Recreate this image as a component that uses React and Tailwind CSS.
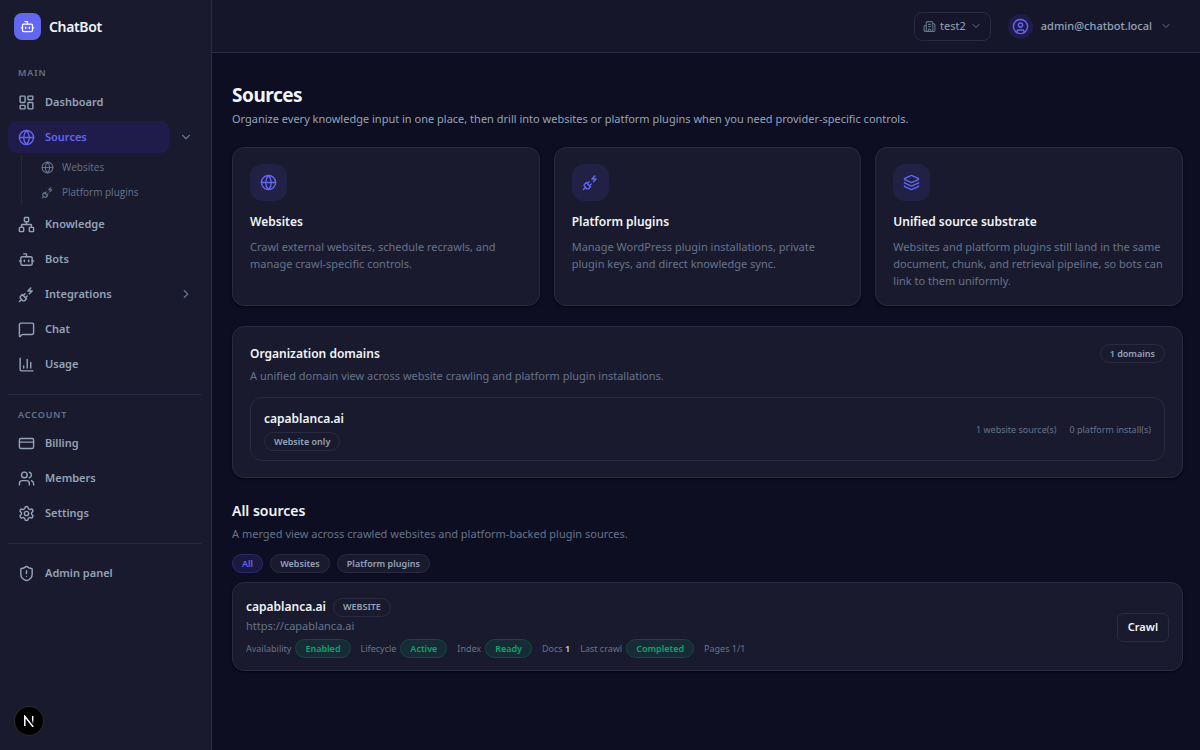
import {
  LayoutDashboard, Globe, Network, Bot, PlugZap, MessageSquare, ChartColumn, CreditCard,
  Users, Settings, ShieldAlert, Building2, CircleUser, Layers, ChevronDown, ChevronRight,
} from 'lucide-react';

function NavItem({ icon: Icon, label, active }) {
  return (
    <a
      href="#"
      className={`flex h-8 min-w-0 flex-1 items-center gap-[10px] rounded-lg px-[10px] text-[11px] font-semibold ${active ? 'bg-[#1f1b4b] text-[#6366f1]' : 'text-[#94a3b8]'}`}
    >
      <Icon size={17} className="shrink-0" />
      <span>{label}</span>
    </a>
  );
}

function NavRow({ children }) {
  return <li className="flex items-center">{children}</li>;
}

function NavHeading({ children }) {
  return (
    <h2 className="px-[10px] text-[9px] leading-4 font-semibold tracking-widest text-[#64748b] uppercase">
      {children}
    </h2>
  );
}

function SubItem({ icon: Icon, label }) {
  return (
    <li>
      <a href="#" className="flex h-[25px] items-center gap-2 pl-[19px] font-['Open_Sans','Noto_Sans',sans-serif] text-[10px] font-medium text-[#64748b]">
        <Icon size={13} className="shrink-0" />
        <span>{label}</span>
      </a>
    </li>
  );
}

function Sidebar() {
  return (
    <aside className="flex w-[212px] shrink-0 flex-col border-r border-[#2a2a40] bg-[#1a1a2e] px-2">
      <div className="flex h-[53px] items-center gap-2 px-[6px]">
        <span className="flex size-[27px] items-center justify-center rounded-lg bg-[#6366f1] text-white">
          <Bot size={15} />
        </span>
        <span className="text-[14px] font-semibold tracking-tight text-[#f1f5f9]">ChatBot</span>
      </div>
      <nav className="mt-3">
        <NavHeading>Main</NavHeading>
        <ul className="mt-[5px] flex flex-col gap-[3px]">
          <NavRow><NavItem icon={LayoutDashboard} label="Dashboard" /></NavRow>
          <li>
            <div className="flex items-center">
              <NavItem icon={Globe} label="Sources" active />
              <button aria-label="Collapse sources" className="flex h-8 w-[34px] items-center justify-center text-[#64748b]">
                <ChevronDown size={14} />
              </button>
            </div>
            <ul className="mt-[2px] ml-[13px] border-l border-[#25253c]">
              <SubItem icon={Globe} label="Websites" />
              <SubItem icon={PlugZap} label="Platform plugins" />
            </ul>
          </li>
          <NavRow><NavItem icon={Network} label="Knowledge" /></NavRow>
          <NavRow><NavItem icon={Bot} label="Bots" /></NavRow>
          <NavRow>
            <NavItem icon={PlugZap} label="Integrations" />
            <button aria-label="Expand integrations" className="flex h-8 w-[34px] items-center justify-center text-[#64748b]">
              <ChevronRight size={14} />
            </button>
          </NavRow>
          <NavRow><NavItem icon={MessageSquare} label="Chat" /></NavRow>
          <NavRow><NavItem icon={ChartColumn} label="Usage" /></NavRow>
        </ul>
        <hr className="mt-[14px] mr-[2px] border-[#2a2a40]" />
        <div className="mt-3">
          <NavHeading>Account</NavHeading>
        </div>
        <ul className="mt-1 flex flex-col gap-[3px]">
          <NavRow><NavItem icon={CreditCard} label="Billing" /></NavRow>
          <NavRow><NavItem icon={Users} label="Members" /></NavRow>
          <NavRow><NavItem icon={Settings} label="Settings" /></NavRow>
        </ul>
        <hr className="mt-[14px] mr-[2px] border-[#2a2a40]" />
        <ul className="mt-[13px]">
          <NavRow><NavItem icon={ShieldAlert} label="Admin panel" /></NavRow>
        </ul>
      </nav>
      <div className="mt-auto px-[7px] pb-[15px]">
        <button aria-label="Open developer tools" className="flex size-7 items-center justify-center rounded-full bg-black ring-1 ring-[#2b2b2b]">
          <svg width="12" height="12" viewBox="0 0 12 12" fill="none">
            <defs>
              <linearGradient id="fade" x1="0" y1="0" x2="0" y2="1">
                <stop offset="0.5" stopColor="#fff" />
                <stop offset="1" stopColor="#fff" stopOpacity="0" />
              </linearGradient>
            </defs>
            <path d="M1.8 11V1.3L10.2 12" stroke="#fff" strokeWidth="1.5" />
            <rect x="9" y="1" width="1.4" height="8" fill="url(#fade)" />
          </svg>
        </button>
      </div>
    </aside>
  );
}

function Header() {
  return (
    <header className="flex h-[53px] items-center justify-end gap-[17px] border-b border-[#2a2a40] bg-[#16162a] pr-7">
      <button className="flex h-[29px] items-center gap-1 rounded-lg border border-[#2a2a40] px-2 text-[11px] text-[#94a3b8]">
        <Building2 size={13} className="text-[#64748b]" />
        <span>test2</span>
        <ChevronDown size={12} className="text-[#64748b]" />
      </button>
      <button className="flex items-center gap-2 text-[11px] font-medium text-[#94a3b8]">
        <span className="flex size-[25px] items-center justify-center rounded-full bg-[#1f1b4b] text-[#6366f1]">
          <CircleUser size={17} />
        </span>
        <span>admin@chatbot.local</span>
        <ChevronDown size={12} className="text-[#64748b]" />
      </button>
    </header>
  );
}

const card = 'rounded-xl border border-[#2a2a40] bg-[#1a1a2e] shadow-sm shadow-black/50';

function FeatureCard({ icon: Icon, title, children }) {
  return (
    <a href="#" className={`block px-[17px] py-4 ${card}`}>
      <span className="flex size-[37px] items-center justify-center rounded-xl bg-[#212045] text-[#6366f1]">
        <Icon size={17} />
      </span>
      <h2 className="mt-[11px] text-[12px] leading-5 font-semibold text-[#f1f5f9]">{title}</h2>
      <p className="mt-[6px] text-[11px] leading-[17px] text-[#64748b]">{children}</p>
    </a>
  );
}

function Badge({ tone = 'border-[#2a2a40] text-[#94a3b8]', children }) {
  return (
    <span className={`inline-flex h-[19px] shrink-0 items-center rounded-full border px-[9px] text-[9px] font-semibold ${tone}`}>
      {children}
    </span>
  );
}

const green = 'border-[#13483f] bg-[#162b35] text-[#10a36f]';

function Status({ label, value }) {
  return (
    <span className="flex items-center gap-1">
      {label} <Badge tone={green}>{value}</Badge>
    </span>
  );
}

function Filter({ active, children }) {
  return (
    <button
      className={`flex h-[19px] items-center rounded-full border px-[9px] text-[9px] font-semibold ${active ? 'border-[#2c2968] bg-[#1b1842] text-[#6366f1]' : 'border-[#2a2a40] bg-[#1a1a2e] text-[#94a3b8]'}`}
    >
      {children}
    </button>
  );
}

export default function App() {
  return (
    <div className="flex min-h-screen bg-[#0d0e22] font-['Noto_Sans','Open_Sans',sans-serif]">
      <Sidebar />
      <div className="min-w-0 flex-1">
        <Header />
        <main className="pt-[29px] pr-[17px] pb-8 pl-5">
          <h1 className="text-[19px] leading-[26px] font-bold tracking-tight text-[#f1f5f9]">Sources</h1>
          <p className="mt-[2px] text-[11px] leading-[17px] text-[#94a3b8]">
            Organize every knowledge input in one place, then drill into websites or platform plugins when you need
            provider-specific controls.
          </p>

          <div className="mt-5 grid grid-cols-3 gap-[14px]">
            <FeatureCard icon={Globe} title="Websites">
              Crawl external websites, schedule recrawls, and manage crawl-specific controls.
            </FeatureCard>
            <FeatureCard icon={PlugZap} title="Platform plugins">
              Manage WordPress plugin installations, private plugin keys, and direct knowledge sync.
            </FeatureCard>
            <FeatureCard icon={Layers} title="Unified source substrate">
              Websites and platform plugins still land in the same document, chunk, and retrieval pipeline, so bots can
              link to them uniformly.
            </FeatureCard>
          </div>

          <section className={`mt-5 px-[17px] pt-[17px] pb-4 ${card}`}>
            <div className="flex items-start justify-between">
              <div>
                <h2 className="text-[12px] leading-5 font-semibold text-[#f1f5f9]">Organization domains</h2>
                <p className="mt-[3px] text-[11px] leading-[17px] text-[#64748b]">
                  A unified domain view across website crawling and platform plugin installations.
                </p>
              </div>
              <Badge>1 domains</Badge>
            </div>
            <div className="mt-[13px] flex items-center justify-between rounded-xl border border-[#2a2a40] px-[13px] pt-[11px] pb-[9px]">
              <div>
                <h3 className="text-[12px] leading-5 font-semibold text-[#f1f5f9]">capablanca.ai</h3>
                <div className="mt-[3px] flex">
                  <Badge>Website only</Badge>
                </div>
              </div>
              <div className="flex gap-[13px] text-[9px] text-[#64748b]">
                <span>1 website source(s)</span>
                <span>0 platform install(s)</span>
              </div>
            </div>
          </section>

          <section className="mt-[23px]">
            <h2 className="text-[14px] leading-5 font-semibold text-[#f1f5f9]">All sources</h2>
            <p className="mt-1 text-[11px] leading-[17px] text-[#64748b]">
              A merged view across crawled websites and platform-backed plugin sources.
            </p>
            <div className="mt-3 flex gap-[7px]">
              <Filter active>All</Filter>
              <Filter>Websites</Filter>
              <Filter>Platform plugins</Filter>
            </div>
            <article className={`mt-[9px] flex items-center justify-between px-[13px] pt-[14px] pb-3 ${card}`}>
              <div>
                <div className="flex items-center gap-[7px]">
                  <h3 className="text-[12px] leading-5 font-semibold text-[#f1f5f9]">capablanca.ai</h3>
                  <Badge>WEBSITE</Badge>
                </div>
                <p className="text-[11px] leading-[17px] text-[#64748b]">https://capablanca.ai</p>
                <div className="mt-[5px] flex items-center gap-[10px] text-[9px] text-[#64748b]">
                  <Status label="Availability" value="Enabled" />
                  <Status label="Lifecycle" value="Active" />
                  <Status label="Index" value="Ready" />
                  <span>Docs <b className="font-semibold text-[#cbd5e1]">1</b></span>
                  <Status label="Last crawl" value="Completed" />
                  <span>Pages 1/1</span>
                </div>
              </div>
              <button className="h-[29px] rounded-md border border-[#2a2a40] px-[10px] text-[11px] font-semibold text-[#f1f5f9]">
                Crawl
              </button>
            </article>
          </section>
        </main>
      </div>
    </div>
  );
}
